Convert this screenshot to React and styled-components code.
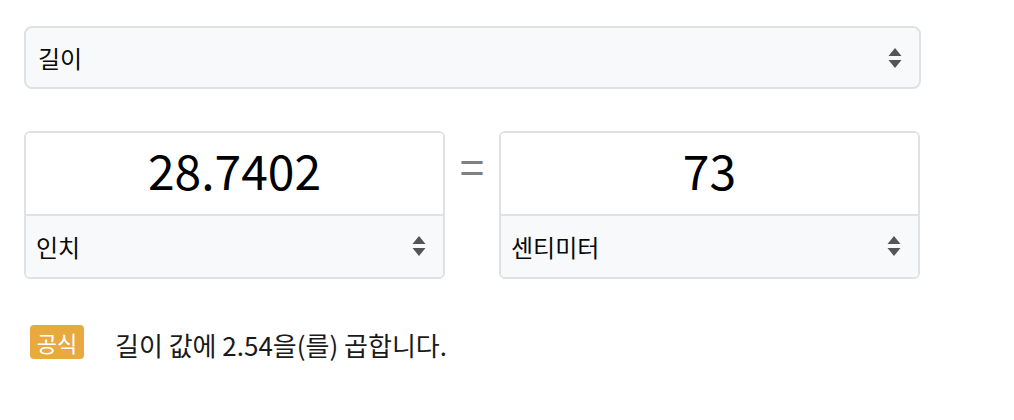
import React, { useState } from "react";
import styled, { createGlobalStyle } from "styled-components";

const GlobalStyle = createGlobalStyle`
  body {
    margin: 0;
    background: #ffffff;
    font-family: "Noto Sans CJK KR", "Noto Sans", sans-serif;
    color: #111;
  }
`;

const Page = styled.div`
  padding: 26px 0 0 24px;
  width: 897px;
  display: flex;
  flex-direction: column;
`;

const SelectBox = styled.div`
  display: flex;
  align-items: center;
  justify-content: space-between;
  height: ${(p) => p.$height}px;
  padding: 0 17px 0 ${(p) => p.$padLeft}px;
  box-sizing: border-box;
  background: #f8f9fa;
  border: ${(p) => (p.$bare ? "none" : "2px solid #dfe1e4")};
  border-radius: ${(p) => (p.$bare ? "0" : "8px")};
  font-size: 24px;
  color: #0a0a0a;
`;

const Converter = styled.div`
  display: flex;
  align-items: flex-start;
  margin-top: 42px;
`;

const Card = styled.div`
  width: 421px;
  height: 148px;
  box-sizing: border-box;
  border: 2px solid #dfe1e4;
  border-radius: 6px;
  overflow: hidden;
  display: flex;
  flex-direction: column;
`;

const Value = styled.div`
  height: 84px;
  display: flex;
  align-items: center;
  justify-content: center;
  background: #fff;
  border-bottom: 2px solid #dfe1e4;
  font-size: 48px;
  color: #000;
  padding-bottom: 8px;
  box-sizing: border-box;
`;

const Equals = styled.div`
  width: 54px;
  height: 84px;
  display: flex;
  align-items: center;
  justify-content: center;
  color: #808080;
  font-size: 44px;
  line-height: 1;
  padding-bottom: 16px;
  box-sizing: border-box;
`;

const Formula = styled.div`
  display: flex;
  align-items: center;
  margin-top: 41px;
  padding-left: 6px;
`;

const Badge = styled.span`
  width: 54px;
  height: 34px;
  border-radius: 4px;
  background: #e8a93e;
  color: #fff;
  font-size: 22px;
  display: flex;
  align-items: center;
  justify-content: center;
`;

const FormulaText = styled.span`
  margin-left: 31px;
  margin-top: 6px;
  font-size: 26px;
  color: #1a1a1a;
`;

const Arrows = () => (
  <svg width="14" height="22" viewBox="0 0 14 22">
    <path d="M7 1 L13.5 9 H0.5 Z" fill="#555" />
    <path d="M7 21 L13.5 13 H0.5 Z" fill="#555" />
  </svg>
);

const UnitCard = ({ value, unit }) => (
  <Card>
    <Value>{value}</Value>
    <SelectBox $bare $height={62} $padLeft={10}>
      <span>{unit}</span>
      <Arrows />
    </SelectBox>
  </Card>
);

export default function App() {
  const [inches] = useState("28.7402");
  const [cm] = useState("73");

  return (
    <>
      <GlobalStyle />
      <Page>
        <SelectBox $height={63} $padLeft={12}>
          <span>길이</span>
          <Arrows />
        </SelectBox>
        <Converter>
          <UnitCard value={inches} unit="인치" />
          <Equals>=</Equals>
          <UnitCard value={cm} unit="센티미터" />
        </Converter>
        <Formula>
          <Badge>공식</Badge>
          <FormulaText>길이 값에 2.54을(를) 곱합니다.</FormulaText>
        </Formula>
      </Page>
    </>
  );
}
